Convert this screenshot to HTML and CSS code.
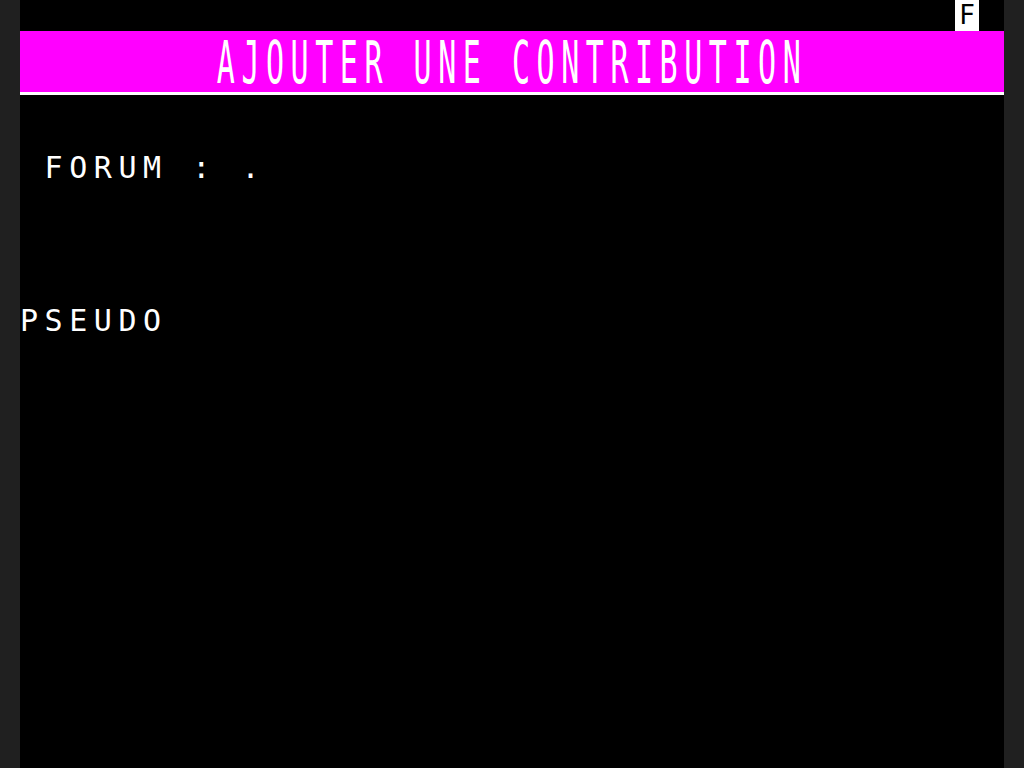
FILE: index.html
```html
<!DOCTYPE html>
<html lang="fr">
<head>
<meta charset="utf-8">
<title>Ajouter une contribution</title>
<link rel="stylesheet" href="styles.css">
</head>
<body>
<div class="screen">
  <div class="status-row"><span class="status-flag">F</span></div>
  <div class="title-band"><h1 class="title">AJOUTER UNE CONTRIBUTION</h1></div>
  <div class="rule"></div>
  <div class="row row-forum"><span class="text indent-1">FORUM : .</span></div>
  <div class="row row-pseudo"><span class="text">PSEUDO</span></div>
</div>
</body>
</html>
```

FILE: styles.css
```css
:root {
  --col: 24.6px;
  --row: 30.72px;
}
* { box-sizing: border-box; }
html, body {
  margin: 0;
  padding: 0;
  background: #202020;
}
body {
  width: 1024px;
  height: 768px;
  overflow: hidden;
}
.screen {
  width: 984px;
  height: 768px;
  margin: 0 auto;
  background: #000;
  display: grid;
  grid-template-rows: 31px repeat(24, 30.708px);
  font-family: "DejaVu Sans Mono", monospace;
  font-size: 30px;
  color: #fff;
}
.status-row {
  grid-row: 1;
  display: flex;
  padding-left: calc(var(--col) * 38);
}
.status-flag {
  display: flex;
  align-items: center;
  justify-content: center;
  width: var(--col);
  height: 31px;
  background: #fff;
  color: #000;
  font-size: 26.5px;
  line-height: 1;
  transform-origin: center;
}
.title-band {
  grid-row: 2 / span 2;
  background: #ff00ff;
  padding-left: calc(var(--col) * 8);
}
.title {
  margin: 4px 0 0;
  font: inherit;
  font-weight: normal;
  line-height: 28px;
  letter-spacing: 6.54px;
  white-space: pre;
  transform: scaleY(1.98);
  transform-origin: top left;
}
.rule {
  grid-row: 4;
  height: 3px;
  background: #fff;
}
.row {
  line-height: 28px;
  letter-spacing: 6.54px;
  white-space: pre;
}
.row-forum { grid-row: 6; }
.row-pseudo { grid-row: 11; }
.indent-1 { padding-left: var(--col); }
.text { display: inline-block; }
```
